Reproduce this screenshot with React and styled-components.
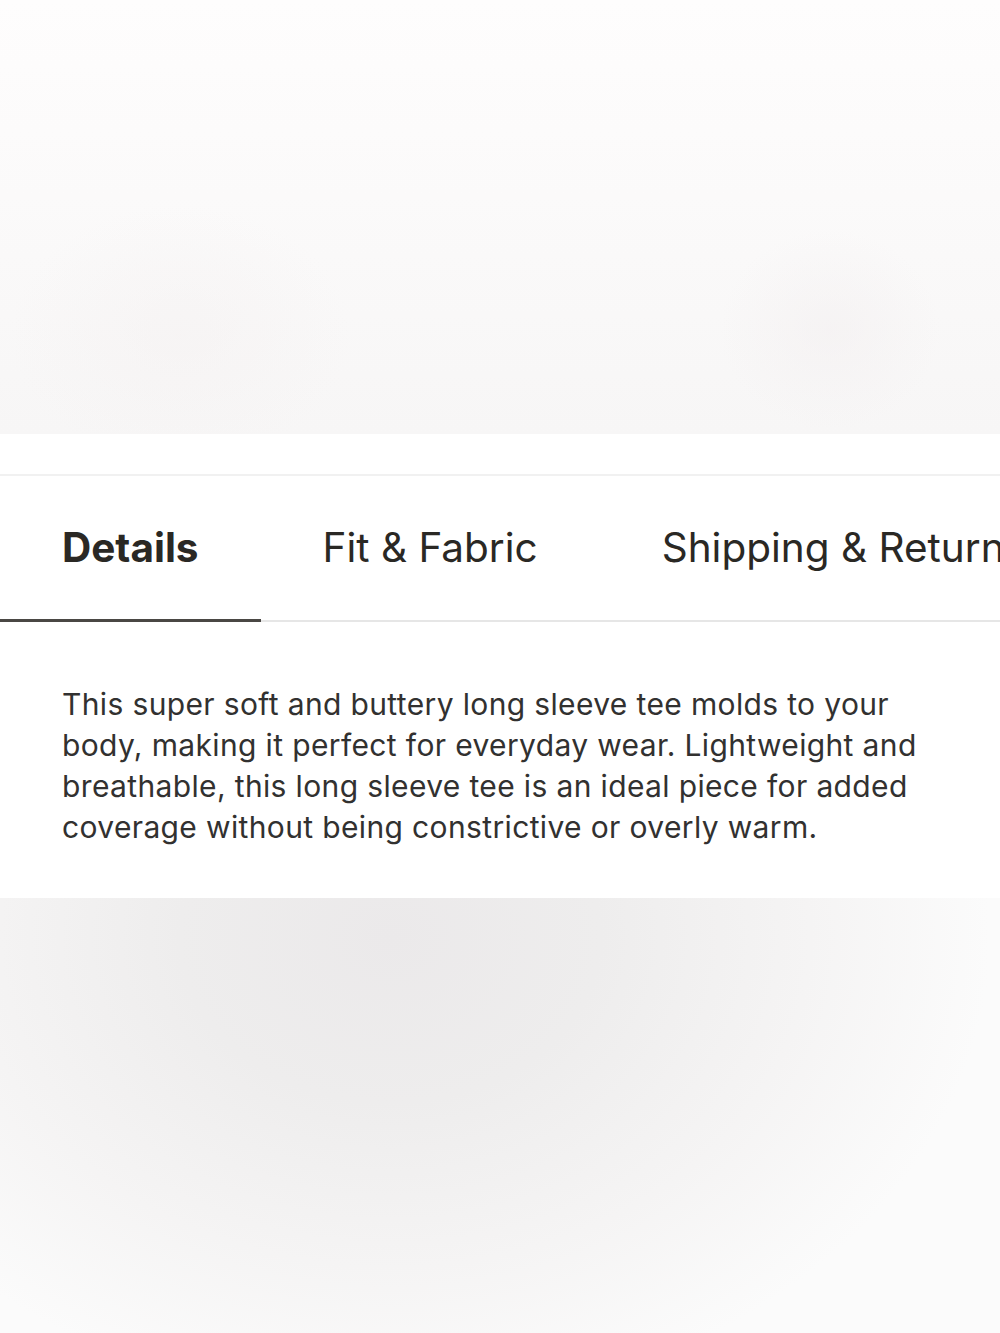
import React, { useState } from "react";
import styled, { createGlobalStyle } from "styled-components";

const GlobalStyle = createGlobalStyle`
	html, body {
		margin: 0;
		padding: 0;
		background: #ffffff;
	}
	body {
		font-family: Inter, "Noto Sans", "Liberation Sans", sans-serif;
		color: #2b2926;
	}
`;

const tabs = [
	{
		id: "details",
		label: "Details",
		body: "This super soft and buttery long sleeve tee molds to your body, making it perfect for everyday wear. Lightweight and breathable, this long sleeve tee is an ideal piece for added coverage without being constrictive or overly warm.",
	},
	{ id: "fit", label: "Fit & Fabric", body: "" },
	{ id: "shipping", label: "Shipping & Returns", body: "" },
];

const App = () => {
	const [active, setActive] = useState("details");
	const current = tabs.find((t) => t.id === active);

	return (
		<>
			<GlobalStyle />
			<Page>
				{/* product shot above the info panel */}
				<Photo $variant="top" />

				<InfoPanel>
					{/* tab strip is wider than the screen, last tab runs off the edge */}
					<TabBar>
						{tabs.map((tab) => (
							<Tab
								key={tab.id}
								$active={tab.id === active}
								onClick={() => setActive(tab.id)}
							>
								{tab.label}
							</Tab>
						))}
					</TabBar>
					<TabBody>{current.body}</TabBody>
				</InfoPanel>

				{/* next product shot */}
				<Photo $variant="bottom" />
			</Page>
		</>
	);
};

const Page = styled.main`
	width: 1000px;
	overflow: hidden;
`;

const Photo = styled.div`
	height: ${(p) => (p.$variant === "top" ? "434px" : "435px")};
	background: ${(p) =>
		p.$variant === "top"
			? `radial-gradient(ellipse 110px 100px at 830px 330px, rgba(242, 238, 239, 0.5), rgba(242, 238, 239, 0) 100%),
			   radial-gradient(ellipse 170px 130px at 180px 335px, rgba(244, 240, 240, 0.45), rgba(244, 240, 240, 0) 100%),
			   linear-gradient(180deg, #fefdfd 0%, #fbfafa 45%, #f7f6f6 100%)`
			: `radial-gradient(ellipse 600px 470px at 390px 40px, #ebe9ea 0%, #eeeded 35%, #f5f4f4 70%, #fbfbfb 100%)`};
`;

const InfoPanel = styled.section`
	background: #ffffff;
	padding-top: 40px;
	padding-bottom: 50px;
`;

const TabBar = styled.nav`
	display: flex;
	height: 144px;
	border-top: 2px solid #f1f1f1;
	border-bottom: 2px solid #e6e6e6;
	white-space: nowrap;
`;

const Tab = styled.button`
	flex: none;
	display: flex;
	align-items: center;
	padding: 0 62px;
	margin-bottom: -2px;
	background: none;
	border: none;
	border-bottom: 3px solid ${(p) => (p.$active ? "#4a4744" : "transparent")};
	font-family: Inter, "Noto Sans", sans-serif;
	font-size: 40.5px;
	font-weight: ${(p) => (p.$active ? 700 : 400)};
	color: #2a2824;
	cursor: pointer;
`;

const TabBody = styled.p`
	margin: 0;
	padding: 62px 62px 0;
	max-width: 870px;
	font-size: 30px;
	line-height: 41px;
	letter-spacing: 0.36px;
	color: #323130;
`;

export default App;
